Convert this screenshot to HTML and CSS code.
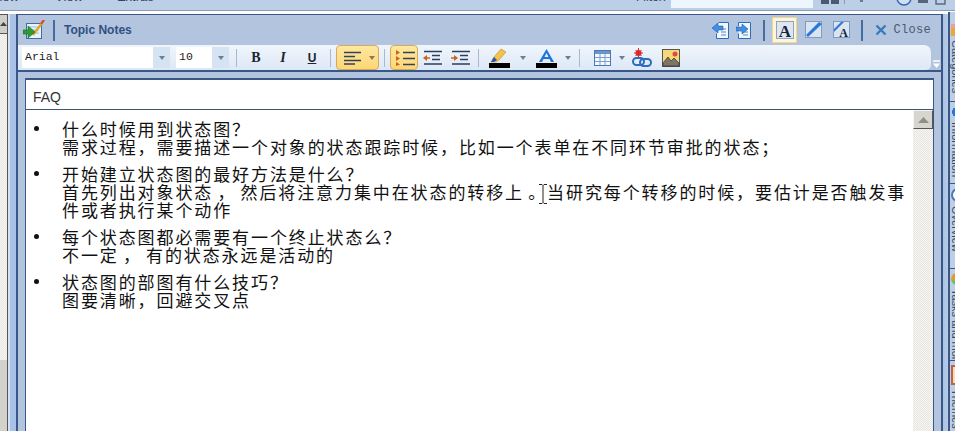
FILE: index.html
```html
<!DOCTYPE html>
<html lang="zh">
<head>
<meta charset="utf-8">
<title>Topic Notes</title>
<link rel="stylesheet" href="styles.css">
</head>
<body>
<header class="menubar">
  <nav class="menu"><span class="m1">View</span><span class="m2">View</span><span class="m3">Extras</span></nav>
  <div class="filter"><span class="filter-label">Filter:</span><span class="filter-box"></span></div>
  <div class="wintools">
    <svg width="22" height="6" viewBox="0 0 22 6"><rect x="1" y="-3" width="8" height="7" fill="#4a5a70"/><rect x="11" y="-3" width="8" height="7" fill="#4a5a70"/></svg>
    <svg class="wt2" width="52" height="6" viewBox="0 0 52 6"><rect x="0" y="0" width="1" height="4" fill="#8a9ab0"/><rect x="16" y="0" width="3" height="2" fill="#6a7a90"/></svg>
    <svg class="wt3" width="18" height="6" viewBox="0 0 18 6"><circle cx="8" cy="-2" r="7" fill="#cfe0f5" stroke="#3a66b0" stroke-width="1.5"/></svg>
    <svg class="wt4" width="46" height="6" viewBox="0 0 46 6"><rect x="2" y="0" width="10" height="3" fill="#55657a"/><rect x="20" y="-3" width="9" height="7" fill="none" stroke="#55657a" stroke-width="1.4"/></svg>
  </div>
</header>
<div class="workspace">
  <div class="left-scroll">
    <div class="ls-btn"><svg width="7" height="6" viewBox="0 0 7 6"><path d="M0 5 L3.5 1 L7 5Z" fill="#444"/></svg></div>
    <div class="ls-track"></div>
    <div class="ls-thumb"></div>
  </div>
  <div class="gutter"></div>
  <main class="panel">
    <div class="titlebar">
      <svg class="ico-main" width="22" height="20" viewBox="0 0 22 20"><rect x="3.5" y="3.5" width="15" height="15" fill="#eaf2fb" stroke="#3c6ea8"/><path d="M6 7h10M6 10h10M6 13h10" stroke="#9dbbdc"/><path d="M10 15 L19 3" stroke="#e0a92e" stroke-width="2.5"/><path d="M18 4 L21 0" stroke="#e04a28" stroke-width="2.4"/><path d="M0 10h5V6l7 6-7 6v-4H0z" fill="#2d9a35" stroke="#18661e" stroke-width=".6"/></svg>
      <span class="tb-sep sep-a"></span>
      <span class="title-text">Topic Notes</span>
      <span class="grow"></span>
      <svg class="ti1" width="18" height="19" viewBox="0 0 18 19"><path d="M6.500 1.500h10v16h-12v-5" fill="#f3f8fe" stroke="#2a6cc0"/><path d="M9 8h5M9 11h5M9 14h5" stroke="#5a86b8"/><path d="M0 7 L6 2v3h5v4H6v3z" fill="#3f8fe6" stroke="#1f5fb0" stroke-width=".6"/></svg>
      <svg class="ti2" width="18" height="19" viewBox="0 0 18 19"><path d="M2.500 5v-3.500h12v16h-12v-5" fill="#f3f8fe" stroke="#2a6cc0"/><path d="M7 11h5M7 14h5" stroke="#5a86b8"/><path d="M0 6h6V3l6 5-6 5v-3H0z" fill="#3f8fe6" stroke="#1f5fb0" stroke-width=".6"/></svg>
      <span class="tb-sep sep-b"></span>
      <span class="mode-on"><svg width="18" height="18" viewBox="0 0 18 18"><rect x=".5" y=".5" width="17" height="17" fill="#dfe6f0" stroke="#8fa4c0"/><text x="9" y="15.500" text-anchor="middle" class="big-a">A</text></svg></span>
      <svg class="ti4" width="18" height="18" viewBox="0 0 18 18"><rect x=".5" y=".5" width="16" height="16" fill="#dbe5f2" stroke="#7f9cc0"/><path d="M1 14 L3 16 L17 3 L14 1z" fill="#2b78dc"/></svg>
      <svg class="ti5" width="18" height="18" viewBox="0 0 18 18"><rect x=".5" y=".5" width="16" height="16" fill="#dbe5f2" stroke="#7f9cc0"/><path d="M1 8 L8 1 L11 1 L1 11z" fill="#2b78dc"/><text x="10.500" y="16" text-anchor="middle" class="small-a">A</text></svg>
      <span class="tb-sep sep-c"></span>
      <svg class="close-x" width="12" height="12" viewBox="0 0 12 12"><path d="M1.500 1.500 L10.500 10.500M10.500 1.500 L1.500 10.500" stroke="#3b7ab8" stroke-width="2.400"/></svg>
      <span class="close-text">Close</span>
    </div>
    <div class="toolrow">
      <div class="toolbar">
        <div class="combo combo-font"><span class="combo-val">Arial</span><span class="combo-arrow"></span></div>
        <div class="combo combo-size"><span class="combo-val">10</span><span class="combo-arrow"></span></div>
        <span class="sep s1"></span>
        <b class="fmt f-b">B</b><i class="fmt f-i">I</i><u class="fmt f-u">U</u>
        <span class="sep s2"></span>
        <div class="hot hot-align">
          <svg width="18" height="14" viewBox="0 0 18 14"><path d="M0 1.500h17M0 5.500h11M0 9.500h17M0 13h11" stroke="#33415a" stroke-width="1.600"/></svg>
          <span class="caret"></span>
        </div>
        <span class="sep s3"></span>
        <div class="hot hot-list">
          <svg width="20" height="16" viewBox="0 0 20 16"><path d="M0 0 L4 2.500 L0 5zM0 6 L4 8.500 L0 11zM0 12 L4 14.500 L0 16z" fill="#c8641e"/><path d="M7 2.500h12M7 8.500h12M7 14.500h12" stroke="#33415a" stroke-width="1.600"/></svg>
        </div>
        <svg class="ind ind1" width="20" height="16" viewBox="0 0 20 16"><path d="M2 8h5" stroke="#c8641e" stroke-width="1.500"/><path d="M0 8 L4 5v6z" fill="#c8641e"/><path d="M1 1.500h18M9 5.500h8M9 9.500h8M1 14h18" stroke="#2c3e5c" stroke-width="1.500"/></svg>
        <svg class="ind ind2" width="20" height="16" viewBox="0 0 20 16"><path d="M0 8h5" stroke="#c8641e" stroke-width="1.500"/><path d="M7 8 L3 5v6z" fill="#c8641e"/><path d="M1 1.500h18M9 5.500h8M9 9.500h8M1 14h18" stroke="#2c3e5c" stroke-width="1.500"/></svg>
        <span class="sep s4"></span>
        <svg class="col col1" width="22" height="20" viewBox="0 0 22 20"><path d="M2 14 L5 9 L12 1 L17 4 L10 12 L7 14z" fill="#f2c14e" stroke="#c99a2a" stroke-width=".7"/><path d="M2 14 L5 9 L8 12 L5 14z" fill="#2459b4"/><rect x="0" y="15" width="21" height="5" fill="#000"/></svg>
        <span class="caret c1"></span>
        <svg class="col col2" width="21" height="20" viewBox="0 0 21 20"><path d="M10.500 1 L3 14h3l1.500-3h6l1.500 3h3zM8.500 9 L10.500 5 L12.500 9z" fill="#1e74d8" fill-rule="evenodd"/><rect x="0" y="15" width="21" height="5" fill="#000"/></svg>
        <span class="caret c2"></span>
        <span class="sep s5"></span>
        <svg class="tbl" width="17" height="16" viewBox="0 0 17 16"><rect x=".5" y=".5" width="16" height="15" fill="#f4f8fd" stroke="#4a78b8"/><rect x="1" y="1" width="15" height="3" fill="#6c94c8"/><path d="M1 7.500h15M1 11.500h15M6 4v11M11 4v11" stroke="#7a9fd0"/></svg>
        <span class="caret c3"></span>
        <svg class="lnk" width="20" height="20" viewBox="0 0 20 20"><circle cx="6.500" cy="5" r="3" fill="#d82a2a"/><path d="M6.500 0v10M2 5h9M3.500 2l6 6M9.500 2l-6 6" stroke="#d82a2a"/><rect x="1" y="10" width="11" height="7" rx="3.500" fill="none" stroke="#2a6cc0" stroke-width="2"/><rect x="8" y="11" width="11" height="7" rx="3.500" fill="none" stroke="#2a6cc0" stroke-width="2"/></svg>
        <svg class="img" width="18" height="18" viewBox="0 0 18 18"><rect x=".5" y=".5" width="17" height="17" fill="#f5d978" stroke="#555"/><circle cx="13" cy="5" r="2.500" fill="#e24a3a"/><path d="M1 17 L1 14 L6 8 L9 12 L12 9 L17 14 L17 17z" fill="#7d7566" stroke="#333" stroke-width=".7"/></svg>
      </div>
      <span class="overflow"><svg width="9" height="9" viewBox="0 0 9 9"><path d="M1 1h7" stroke="#fff" stroke-width="1.500"/><path d="M1 3.500h7L4.500 8z" fill="#fff"/></svg></span>
    </div>
    <div class="band"></div>
    <section class="editor">
      <div class="subject">FAQ</div>
      <div class="body">
        <ul class="notes">
          <li><p>什么时候用到状态图？<br>需求过程，需要描述一个对象的状态跟踪时候，比如一个表单在不同环节审批的状态；</p></li>
          <li><p>开始建立状态图的最好方法是什么？<br>首先列出对象状态 ， 然后将注意力集中在状态的转移上 。当研究每个转移的时候，要估计是否触发事件或者执行某个动作</p></li>
          <li><p>每个状态图都必需要有一个终止状态么？<br>不一定 ， 有的状态永远是活动的</p></li>
          <li><p>状态图的部图有什么技巧？<br>图要清晰，回避交叉点</p></li>
        </ul>
        <div class="vscroll">
          <span class="vs-btn"><svg width="11" height="6" viewBox="0 0 11 6"><path d="M0 6 L5.500 0 L11 6Z" fill="#8f8f88"/></svg></span>
        </div>
        <svg class="ibeam" width="8" height="20" viewBox="0 0 8 20"><path d="M0 .5h3l1 1 1-1h3M4 1.500v17M0 19.500h3l1-1 1 1h3" fill="none" stroke="#222"/></svg>
      </div>
    </section>
  </main>
  <div class="gutter-r"></div>
  <aside class="dock">
    <div class="tab tab1"><span class="dk d-orange"></span><span class="vt">Categories</span></div>
    <div class="tab tab2"><span class="dk d-blue"></span><span class="vt">Information</span></div>
    <div class="tab tab3"><span class="dk d-circle"></span><span class="vt">Overview</span></div>
    <div class="tab tab4"><span class="dk d-green"></span><span class="vt">Tasks and more</span></div>
    <div class="tab tab5"><span class="dk d-red"></span><span class="vt">Themes</span></div>
  </aside>
</div>
</body>
</html>
```
FILE: styles.css
```css
* { box-sizing: border-box; }
html, body { margin: 0; padding: 0; }
body {
  width: 955px; height: 431px; overflow: hidden;
  background: #bccfe7;
  font-family: "Liberation Sans", Arial, sans-serif;
}
svg { display: block; flex: none; }

/* top menu */
.menubar {
  height: 14px; display: flex; overflow: hidden;
  background: #bccfe7;
  border-bottom: 3px solid #fff;
  box-shadow: inset 0 -1px 0 #8d9db5;
  color: #33475f; font-size: 13px;
}
.menu { display: flex; margin-top: -11px; height: 16px; line-height: 16px; width: 636px; flex: none; }
.m1 { margin-left: -9px; }
.m2 { margin-left: 36px; }
.m3 { margin-left: 34px; }
.filter { display: flex; width: 177px; flex: none; }
.filter-label { margin-top: -11px; height: 16px; line-height: 16px; font-size: 12px; }
.filter-box { width: 142px; height: 8px; margin-left: auto; background: #edf5fd; }
.wintools { display: flex; margin-left: 7px; height: 6px; }
.wt2 { margin-left: 2px; }
.wt4 { margin-left: 2px; }

/* workspace */
.workspace { display: flex; height: 417px; }
.left-scroll { width: 8px; display: flex; flex-direction: column; border-right: 1px solid #55565a; }
.ls-btn {
  height: 20px; background: #cfcfc8; border-bottom: 1px solid #555;
  display: flex; justify-content: center; padding-top: 7px; box-shadow: inset 0 1px 0 #555;
}
.ls-track {
  height: 326px;
  background: repeating-conic-gradient(#e8e6e2 0 25%, #f8f7f4 0 50%) 0 0 / 2px 2px;
}
.ls-thumb { flex: 1; background: #d3d1cb; }
.gutter { width: 8px; background: linear-gradient(90deg, #d7e2f1 0 2px, #a9c3e8 2px); }

.panel { width: 927px; display: flex; flex-direction: column; border: solid #3b5785; border-width: 1px 2px 0 2px; background: #b3c4de; }

/* title */
.titlebar { height: 30px; display: flex; align-items: center; padding-left: 5px; flex: none; }
.tb-sep { width: 2px; height: 21px; background: #476c9e; flex: none; }
.sep-a { margin-left: 8px; }
.title-text { margin-left: 9px; color: #2f5083; font-weight: bold; font-size: 12px; }
.grow { flex: 1; }
.ti2 { margin-left: 6px; }
.sep-b { margin-left: 9px; }
.mode-on {
  width: 25px; height: 26px; margin-left: 7px; display: flex; align-items: center; justify-content: center;
  background: #fdf6dc; border: 1px solid #f4d67e;
}
.big-a { font: bold 17px "Liberation Serif", serif; fill: #16233c; }
.small-a { font: bold 12px "Liberation Serif", serif; fill: #16233c; }
.ti4 { margin-left: 8px; }
.ti5 { margin-left: 10px; }
.sep-c { margin-left: 10px; }
.close-x { margin-left: 12px; }
.close-text { margin-left: 6px; margin-right: 10px; font: 12px "Liberation Mono", monospace; color: #4a5a70; letter-spacing: .3px; }

/* toolbar */
.toolrow { display: flex; height: 27px; flex: none; border-bottom: 2px solid #3b5785; }
.toolbar {
  width: 913px; height: 25px; padding-left: 4px;
  display: flex; align-items: center;
  background: linear-gradient(#f0f5fc, #dde8f6);
  border-radius: 0 7px 5px 0;
}
.overflow { flex: 1; display: flex; align-items: flex-end; justify-content: center; padding-bottom: 1px; background: #b3c4de; }
.combo { height: 21px; display: flex; background: #fff; flex: none; }
.combo-font { width: 148px; }
.combo-size { width: 53px; margin-left: 6px; }
.combo-val { flex: 1; padding-left: 3px; font: 11.500px/19px "Liberation Mono", monospace; color: #222; }
.combo-arrow { width: 17px; background: #d6e3f3; display: flex; align-items: center; justify-content: center; }
.combo-arrow::after, .caret { content: ""; width: 0; height: 0; border: 3.500px solid transparent; border-top: 4px solid #6d7f96; border-bottom: 0; flex: none; }
.sep { width: 1px; height: 18px; background: #aab8c9; flex: none; }
.s1 { margin-left: 7px; }
.fmt { width: 26px; text-align: center; font-family: "Liberation Serif", serif; font-weight: 900; font-size: 14px; color: #20242c; flex: none; }
.f-b { margin-left: 6px; }
.f-i { margin-left: 1px; font-style: italic; }
.f-u { margin-left: 3px; font-family: "Liberation Sans", sans-serif; font-size: 12px; }
.s2 { margin-left: 5px; }
.hot {
  height: 25px; display: flex; align-items: center; flex: none;
  background: linear-gradient(#fde7a0, #fdd775);
  border: 1px solid #d6aa5a; border-radius: 4px;
}
.hot-align { width: 43px; margin-left: 5px; padding-left: 7px; }
.hot-align .caret { margin-left: 7px; border-top-color: #8a7a50; }
.s3 { margin-left: 5px; }
.hot-list { width: 28px; margin-left: 5px; padding-left: 5px; }
.ind1 { margin-left: 5px; }
.ind2 { margin-left: 8px; }
.s4 { margin-left: 7px; }
.col1 { margin-left: 10px; }
.c1 { margin-left: 9px; }
.col2 { margin-left: 10px; }
.c2 { margin-left: 8px; }
.s5 { margin-left: 8px; }
.tbl { margin-left: 14px; }
.c3 { margin-left: 8px; }
.lnk { margin-left: 7px; }
.img { margin-left: 10px; }

.band { height: 6px; flex: none; }

/* editor */
.editor {
  flex: 1; min-height: 0; margin: 0 7px 0 7px; display: flex; flex-direction: column;
  border: solid #3b5785; border-width: 2px 1px 0 1px; background: #fff;
}
.subject { height: 30px; padding: 9px 0 0 7px; font-size: 14px; line-height: 16px; color: #333; border-bottom: 1px solid #3f5770; flex: none; }
.body { flex: 1; min-height: 0; display: flex; position: relative; }
.notes {
  flex: 1; margin: 0; padding: 10px 4px 0 7px; list-style: none;
  font-family: "Noto Sans CJK SC", sans-serif; font-size: 17px; line-height: 18px; letter-spacing: 1.900px; word-spacing: -1.500px; color: #111;
}
.notes li { display: flex; margin-bottom: 9px; }
.notes li::before { content: ""; width: 5px; height: 5px; border-radius: 50%; background: #111; margin: 6px 23px 0 1px; flex: none; }
.notes p { margin: 0; }
.vscroll {
  width: 20px; flex: none;
  background: repeating-conic-gradient(#e6e4e0 0 25%, #f8f7f4 0 50%) 0 0 / 2px 2px;
}
.vs-btn {
  height: 19px; display: flex; align-items: center; justify-content: center;
  background: #d6d5ce; border: 1px solid; border-color: #f4f4f0 #555 #555 #f4f4f0;
}
.ibeam { position: absolute; left: 513px; top: 74px; }

.gutter-r { width: 5px; background: linear-gradient(90deg, #a9c3e8, #b8cbe6); }

/* right dock */
.dock { flex: 1; display: flex; flex-direction: column; border-left: 2px solid #3b5785; background: #bccfe7; overflow: hidden; margin-top: -2px; }
.tab { padding: 12px 0 0 1px; border-bottom: 1px solid #3b5785; overflow: hidden; flex: none; }
.tab1 { height: 90px; }
.tab2 { height: 82px; padding-top: 4px; }
.tab3 { height: 85px; padding-top: 4px; }
.tab4 { height: 92px; padding-top: 4px; }
.tab5 { flex: 1; border: 0; padding-top: 4px; }
.dk { display: block; width: 12px; height: 12px; margin-bottom: 4px; }
.d-orange { background: linear-gradient(#e8a0a8 0 30%, #e8a83a 30%); }
.d-blue { background: radial-gradient(circle at 6px 6px, #2a78d8 0 5px, transparent 5px); }
.d-circle { border: 2px solid #4a78b8; border-radius: 50%; background: #fff; height: 14px; width: 14px; }
.d-green { background: linear-gradient(#e8983a 0 60%, #6ac45a 60%); border-radius: 6px; }
.d-red { background: #f7dcb0; border: 2px solid #c0604a; height: 20px; }
.vt { display: block; writing-mode: vertical-rl; font-size: 11px; line-height: 10px; color: #36495f; white-space: nowrap; }
```
